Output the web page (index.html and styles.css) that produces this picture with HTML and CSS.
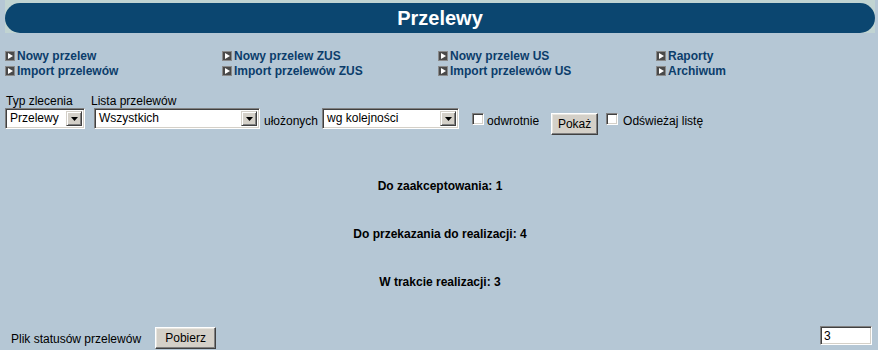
FILE: index.html
```html
<!DOCTYPE html>
<html lang="pl">
<head>
<meta charset="utf-8">
<title>Przelewy</title>
<link rel="stylesheet" href="styles.css">
</head>
<body>
<div class="page">
  <div class="head"><h1 class="titlebar">Przelewy</h1></div>

  <div class="links">
    <a class="link" href="#"><svg class="bullet" viewBox="0 0 10 10" width="10" height="10"><rect x="0" y="0" width="10" height="10" fill="#8a8a8a"/><rect x="1" y="1" width="8" height="8" fill="#4a4a4a"/><path d="M3 2 L8 5 L3 8 Z" fill="#fff"/></svg>Nowy przelew</a>
    <a class="link" href="#"><svg class="bullet" viewBox="0 0 10 10" width="10" height="10"><rect x="0" y="0" width="10" height="10" fill="#8a8a8a"/><rect x="1" y="1" width="8" height="8" fill="#4a4a4a"/><path d="M3 2 L8 5 L3 8 Z" fill="#fff"/></svg>Nowy przelew ZUS</a>
    <a class="link" href="#"><svg class="bullet" viewBox="0 0 10 10" width="10" height="10"><rect x="0" y="0" width="10" height="10" fill="#8a8a8a"/><rect x="1" y="1" width="8" height="8" fill="#4a4a4a"/><path d="M3 2 L8 5 L3 8 Z" fill="#fff"/></svg>Nowy przelew US</a>
    <a class="link" href="#"><svg class="bullet" viewBox="0 0 10 10" width="10" height="10"><rect x="0" y="0" width="10" height="10" fill="#8a8a8a"/><rect x="1" y="1" width="8" height="8" fill="#4a4a4a"/><path d="M3 2 L8 5 L3 8 Z" fill="#fff"/></svg>Raporty</a>
    <a class="link" href="#"><svg class="bullet" viewBox="0 0 10 10" width="10" height="10"><rect x="0" y="0" width="10" height="10" fill="#8a8a8a"/><rect x="1" y="1" width="8" height="8" fill="#4a4a4a"/><path d="M3 2 L8 5 L3 8 Z" fill="#fff"/></svg>Import przelewów</a>
    <a class="link" href="#"><svg class="bullet" viewBox="0 0 10 10" width="10" height="10"><rect x="0" y="0" width="10" height="10" fill="#8a8a8a"/><rect x="1" y="1" width="8" height="8" fill="#4a4a4a"/><path d="M3 2 L8 5 L3 8 Z" fill="#fff"/></svg>Import przelewów ZUS</a>
    <a class="link" href="#"><svg class="bullet" viewBox="0 0 10 10" width="10" height="10"><rect x="0" y="0" width="10" height="10" fill="#8a8a8a"/><rect x="1" y="1" width="8" height="8" fill="#4a4a4a"/><path d="M3 2 L8 5 L3 8 Z" fill="#fff"/></svg>Import przelewów US</a>
    <a class="link" href="#"><svg class="bullet" viewBox="0 0 10 10" width="10" height="10"><rect x="0" y="0" width="10" height="10" fill="#8a8a8a"/><rect x="1" y="1" width="8" height="8" fill="#4a4a4a"/><path d="M3 2 L8 5 L3 8 Z" fill="#fff"/></svg>Archiwum</a>
  </div>

  <div class="filters">
    <div class="field f1">
      <label class="flabel">Typ zlecenia</label>
      <div class="select s1"><span class="value">Przelewy</span><span class="arrow"><svg viewBox="0 0 7 4" width="7" height="4"><path d="M0 0 H7 L3.5 4 Z" fill="#000"/></svg></span></div>
    </div>
    <div class="field f2">
      <label class="flabel">Lista przelewów</label>
      <div class="select s2"><span class="value">Wszystkich</span><span class="arrow"><svg viewBox="0 0 7 4" width="7" height="4"><path d="M0 0 H7 L3.5 4 Z" fill="#000"/></svg></span></div>
    </div>
    <span class="inline-text t-ulozonych">ułożonych</span>
    <div class="select s3"><span class="value">wg kolejności</span><span class="arrow"><svg viewBox="0 0 7 4" width="7" height="4"><path d="M0 0 H7 L3.5 4 Z" fill="#000"/></svg></span></div>
    <input type="checkbox" class="check c1">
    <span class="inline-text t-odw">odwrotnie</span>
    <button class="btn b-pokaz" type="button">Pokaż</button>
    <input type="checkbox" class="check c2">
    <span class="inline-text t-odsw">Odświeżaj listę</span>
  </div>

  <div class="statuses">
    <div class="status">Do zaakceptowania: 1</div>
    <div class="status">Do przekazania do realizacji: 4</div>
    <div class="status">W trakcie realizacji: 3</div>
  </div>

  <div class="bottom">
    <div class="bottom-left">
      <span class="plik">Plik statusów przelewów</span>
      <button class="btn b-pobierz" type="button">Pobierz</button>
    </div>
    <input class="count" type="text" value="3">
  </div>
</div>
</body>
</html>
```

FILE: styles.css
```css
html, body {
  margin: 0;
  padding: 0;
  height: 350px;
  overflow: hidden;
}
body {
  background: #b5c7d5;
  font-family: "Liberation Sans", Arial, sans-serif;
  font-size: 12px;
  color: #000;
}
.page {
  padding: 0;
}
.head {
  margin: 0 3px 0 5px;
  padding-top: 3px;
  background: #c1d4d2;
}
.titlebar {
  margin: 0;
  height: 30px;
  border-radius: 15px;
  background: #0b4670;
  color: #fff;
  font-size: 20px;
  font-weight: bold;
  line-height: 30px;
  text-align: center;
}

.links {
  display: grid;
  grid-template-columns: 217px 216px 218px 1fr;
  margin: 15px 0 0 5px;
}
.link {
  display: flex;
  align-items: center;
  height: 15px;
  color: #0b3d6b;
  font-weight: bold;
  font-size: 12px;
  text-decoration: none;
  white-space: nowrap;
}
.bullet {
  display: block;
  width: 10px;
  height: 10px;
  margin-right: 2px;
  flex: none;
}

.filters {
  display: flex;
  align-items: flex-start;
  margin: 16px 0 0 5px;
  height: 40px;
}
.field {
  display: flex;
  flex-direction: column;
}
.flabel {
  line-height: 14px;
  height: 14px;
  white-space: nowrap;
}
.f1 .flabel { padding-left: 1px; }
.f2 { margin-left: 6px; }
.f2 .flabel { padding-left: 0; }
.f2 .select { margin-left: 3px; }

.select {
  box-sizing: border-box;
  display: flex;
  align-items: center;
  height: 21px;
  background: #fff;
  border: 1px solid;
  border-color: #808080 #ffffff #ffffff #808080;
  box-shadow: inset 1px 1px 0 #404040, inset -1px -1px 0 #d4d0c8;
  padding: 2px;
}
.select .value {
  flex: 1;
  padding-left: 2px;
  line-height: 15px;
  white-space: nowrap;
  overflow: hidden;
}
.select .arrow {
  box-sizing: border-box;
  flex: none;
  width: 16px;
  height: 15px;
  display: flex;
  align-items: center;
  justify-content: center;
  background: #d4d0c8;
  border: 1px solid;
  border-color: #d4d0c8 #404040 #404040 #d4d0c8;
  box-shadow: inset 1px 1px 0 #fff, inset -1px -1px 0 #808080;
}
.select .arrow svg { display: block; }
.s1 { width: 80px; }
.s2 { width: 166px; }
.s3 { width: 137px; margin: 14px 0 0 4px; }

.inline-text {
  line-height: 14px;
  margin-top: 20px;
  white-space: nowrap;
}
.t-ulozonych { margin-left: 4px; }
.t-odw { margin-left: 3px; }
.t-odsw { margin-left: 5px; }

.check {
  appearance: none;
  -webkit-appearance: none;
  box-sizing: border-box;
  width: 12px;
  height: 12px;
  margin: 19px 0 0 0;
  background: #fff;
  border: 1px solid;
  border-color: #808080 #ffffff #ffffff #808080;
  box-shadow: inset 1px 1px 0 #404040, inset -1px -1px 0 #d4d0c8;
}
.c1 { margin-left: 13px; }
.c2 { margin-left: 8px; }

.btn {
  box-sizing: border-box;
  font-family: "Liberation Sans", Arial, sans-serif;
  font-size: 12px;
  color: #000;
  background: #d4d0c8;
  border: 1px solid;
  border-color: #ffffff #404040 #404040 #ffffff;
  box-shadow: inset -1px -1px 0 #808080, inset 1px 1px 0 #e8e6e0;
  padding: 0;
  height: 22px;
  line-height: 18px;
}
.b-pokaz {
  width: 47px;
  margin: 19px 0 0 12px;
}

.statuses {
  display: flex;
  flex-direction: column;
  align-items: center;
  gap: 34px;
  margin-top: 45px;
}
.status {
  font-weight: bold;
  line-height: 14px;
  padding-left: 2px;
}

.bottom {
  display: flex;
  justify-content: space-between;
  align-items: flex-start;
  margin-top: 37px;
  padding: 0 6px 0 11px;
}
.bottom-left {
  display: flex;
  align-items: flex-start;
}
.plik {
  line-height: 14px;
  margin-top: 6px;
}
.b-pobierz {
  width: 61px;
  margin: 1px 0 0 14px;
}
.count {
  box-sizing: border-box;
  width: 52px;
  height: 19px;
  margin: 0;
  padding: 0 3px;
  font-family: "Liberation Sans", Arial, sans-serif;
  font-size: 12px;
  background: #fff;
  border: 1px solid;
  border-color: #808080 #ffffff #ffffff #808080;
  box-shadow: inset 1px 1px 0 #404040, inset -1px -1px 0 #d4d0c8;
  outline: none;
}
```
